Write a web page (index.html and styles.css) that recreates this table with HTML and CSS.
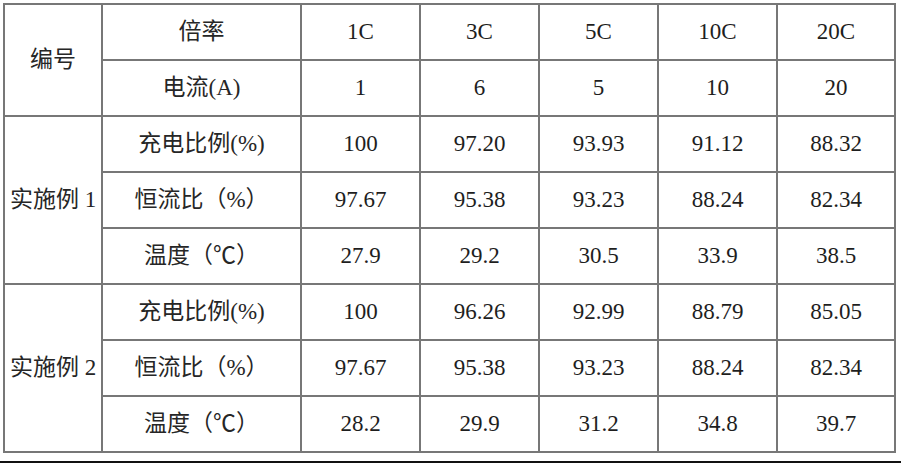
FILE: index.html
```html
<!DOCTYPE html>
<html lang="en">
<head>
    <meta charset="UTF-8">
    <title>倍率性能</title>
    <link rel="stylesheet" href="styles.css">
</head>
<body>
    <div class="sheet">
        <table class="data">
            <colgroup>
                <col class="c-id">
                <col class="c-item">
                <col class="c-val">
                <col class="c-val">
                <col class="c-val">
                <col class="c-val">
                <col class="c-last">
            </colgroup>
            <tr>
                <td rowspan="2">编号</td>
                <td>倍率</td>
                <td class="num">1C</td><td class="num">3C</td><td class="num">5C</td><td class="num">10C</td><td class="num">20C</td>
            </tr>
            <tr>
                <td>电流(A)</td>
                <td class="num">1</td><td class="num">6</td><td class="num">5</td><td class="num">10</td><td class="num">20</td>
            </tr>
            <tr>
                <td rowspan="3">实施例 1</td>
                <td>充电比例(%)</td>
                <td class="num">100</td><td class="num">97.20</td><td class="num">93.93</td><td class="num">91.12</td><td class="num">88.32</td>
            </tr>
            <tr>
                <td>恒流比（%）</td>
                <td class="num">97.67</td><td class="num">95.38</td><td class="num">93.23</td><td class="num">88.24</td><td class="num">82.34</td>
            </tr>
            <tr>
                <td>温度（℃）</td>
                <td class="num">27.9</td><td class="num">29.2</td><td class="num">30.5</td><td class="num">33.9</td><td class="num">38.5</td>
            </tr>
            <tr>
                <td rowspan="3">实施例 2</td>
                <td>充电比例(%)</td>
                <td class="num">100</td><td class="num">96.26</td><td class="num">92.99</td><td class="num">88.79</td><td class="num">85.05</td>
            </tr>
            <tr>
                <td>恒流比（%）</td>
                <td class="num">97.67</td><td class="num">95.38</td><td class="num">93.23</td><td class="num">88.24</td><td class="num">82.34</td>
            </tr>
            <tr>
                <td>温度（℃）</td>
                <td class="num">28.2</td><td class="num">29.9</td><td class="num">31.2</td><td class="num">34.8</td><td class="num">39.7</td>
            </tr>
        </table>
        <div class="rule"></div>
    </div>
</body>
</html>
```

FILE: styles.css
```css
body {
    margin: 0;
    background: #fff;
    font-family: "Liberation Serif", "Noto Sans CJK SC", serif;
    color: #262626;
}

.sheet {
    width: 901px;
    height: 463px;
    padding-top: 3px;
    box-sizing: border-box;
    display: flex;
    flex-direction: column;
}

.data {
    border-collapse: collapse;
    margin-left: 3px;
    table-layout: fixed;
    width: 891px;
}

.c-id { width: 98px; }
.c-item { width: 199px; }
.c-val { width: 119px; }
.c-last { width: 118px; }

.data td {
    border: 2px solid #777;
    height: 56px;
    padding: 0;
    text-align: center;
    vertical-align: middle;
    font-family: "Liberation Serif", "Noto Sans CJK SC", serif;
    font-size: 23px;
    line-height: 26px;
    box-sizing: border-box;
}

.data td.num {
    font-family: "Liberation Serif", "Times New Roman", serif;
    color: #1e1e1e;
}

.rule {
    margin-top: auto;
    height: 2px;
    background: #111;
}
```
